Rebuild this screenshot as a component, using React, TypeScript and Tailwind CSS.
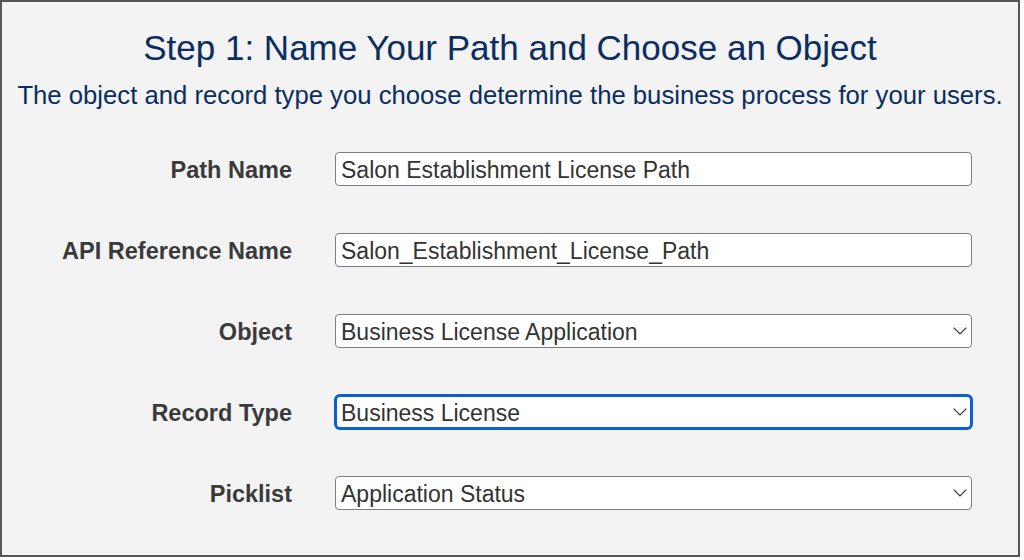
const fields = [
  { label: "Path Name", value: "Salon Establishment License Path", kind: "input" },
  { label: "API Reference Name", value: "Salon_Establishment_License_Path", kind: "input" },
  { label: "Object", value: "Business License Application", kind: "select" },
  { label: "Record Type", value: "Business License", kind: "select", focused: true },
  { label: "Picklist", value: "Application Status", kind: "select" },
];

export default function App() {
  return (
    <div className="h-[560px] w-[1024px] bg-white font-['Liberation_Sans',Arial,sans-serif]">
      <div className="flex h-[557px] w-[1020px] flex-col border-2 border-[#555555] bg-[#f3f3f3]">
        {/* Header */}
        <h1 className="mt-[26px] text-center text-[35px] leading-[40px] text-[#0b2d61]">
          Step 1: Name Your Path and Choose an Object
        </h1>
        <p className="mt-[13px] text-center text-[25.7px] leading-[28px] text-[#0b2d61]">
          The object and record type you choose determine the business process for your users.
        </p>

        {/* Form */}
        <div className="mt-[43px] flex flex-col gap-[47px]">
          {fields.map((f) => (
            <div key={f.label} className="flex h-[34px] items-center">
              <label className="w-[290px] pt-[3px] text-right text-[23.5px] leading-none font-bold text-[#3a3a3a]">
                {f.label}
              </label>
              <div
                className={`relative ml-[43px] flex h-[34px] w-[637px] items-center bg-white text-[23px] leading-none text-[#333333] ${
                  f.focused
                    ? "rounded-[5px] border-2 border-[#0b5fd6] px-[4px] ring-1 ring-[#0b5fd6]"
                    : "rounded-[4px] border border-[#7d7d7d] px-[5px]"
                }`}
              >
                <span className="pt-[2px]">{f.value}</span>
                {f.kind === "select" && (
                  <svg
                    className={`absolute ${f.focused ? "right-[3px]" : "right-[4px]"}`}
                    width="14"
                    height="8"
                    viewBox="0 0 14 8"
                    fill="none"
                  >
                    <polyline
                      points="0.7,0.7 7,7 13.3,0.7"
                      stroke="#333333"
                      strokeWidth="1.2"
                    />
                  </svg>
                )}
              </div>
            </div>
          ))}
        </div>
      </div>
    </div>
  );
}
